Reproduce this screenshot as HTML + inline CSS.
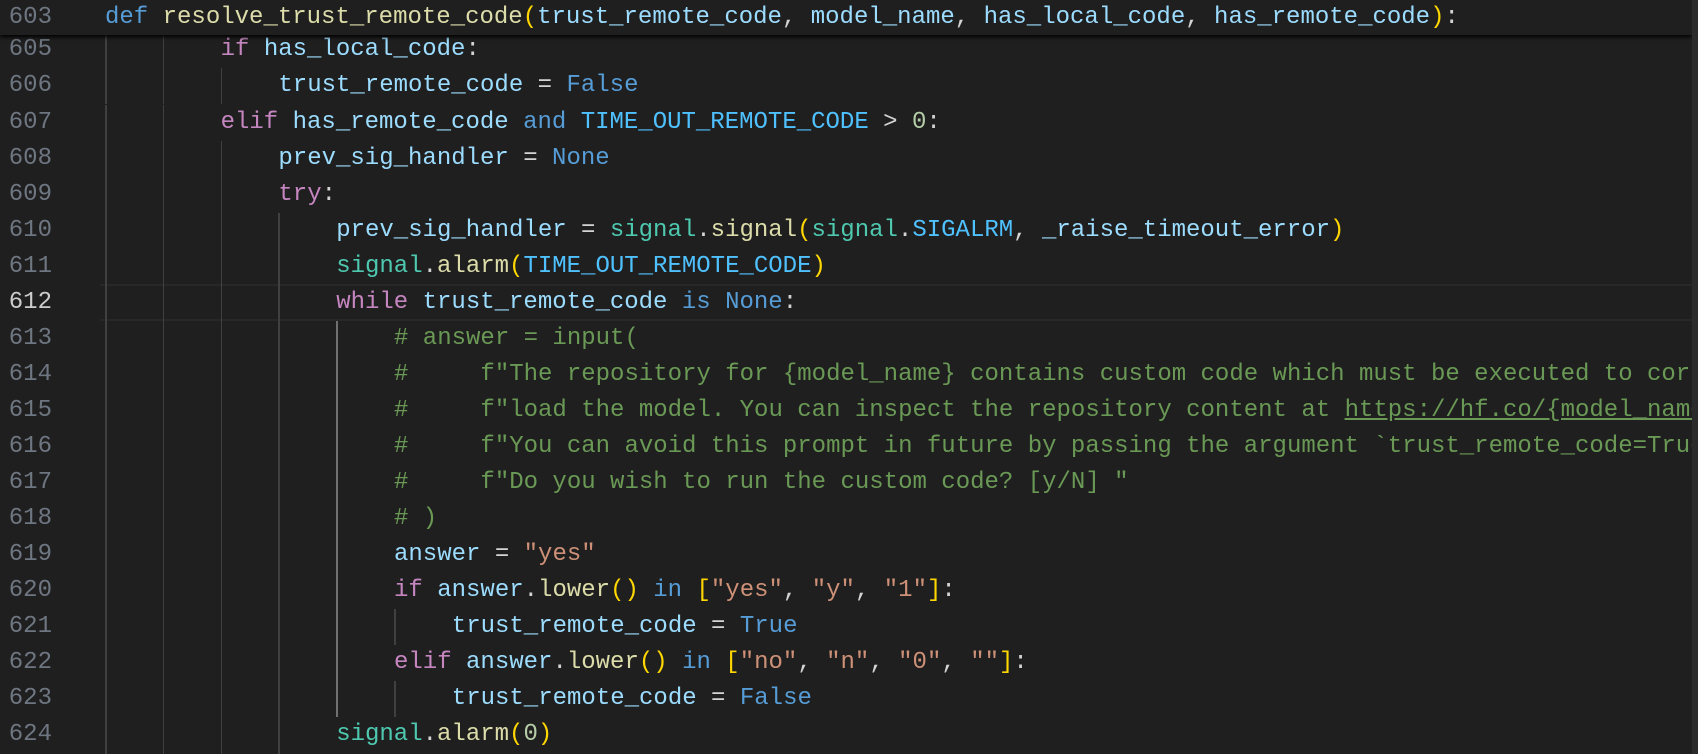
<!DOCTYPE html>
<html><head><meta charset="utf-8"><style>
html,body{margin:0;padding:0;background:#1f1f1f;width:1698px;height:754px;overflow:hidden}
*{box-sizing:border-box}
#ed{position:absolute;left:0;top:0;width:1692px;height:754px;overflow:hidden;background:#1f1f1f;font-family:"Liberation Mono",monospace;font-size:24px}
.ln{position:absolute;left:0;width:52px;text-align:right;color:#6e7681;height:36px;line-height:36px;white-space:pre}
.cd{position:absolute;left:105px;height:36px;line-height:36px;white-space:pre;color:#d4d4d4}
.g{position:absolute;width:1.5px;background:#404040;height:36.05px}
.ga{background:#707070}
.k{color:#c586c0}.b{color:#569cd6}.f{color:#dcdcaa}.v{color:#9cdcfe}.c{color:#4fc1ff}.m{color:#4ec9b0}.s{color:#ce9178}.n{color:#b5cea8}.y{color:#ffd700}.cm{color:#6a9955}.u{text-decoration:underline}
#sticky{position:absolute;left:0;top:0;width:1692px;height:35px;background:#1f1f1f;box-shadow:0 2px 4px #000;z-index:5}
#cur{position:absolute;left:100px;top:284px;width:1592px;height:37px;border-top:2px solid #282828;border-bottom:2px solid #282828}
#sb{position:absolute;left:1692px;top:0;width:6px;height:754px;background:#2b2b2b}
</style></head><body>
<div id="ed">
<div id="cur"></div>
<div id="lines"></div>
<div id="sticky"><div class="ln" style="top:0">603</div><div class="cd" style="top:0"><span class="b">def</span> <span class="f">resolve_trust_remote_code</span><span class="y">(</span><span class="v">trust_remote_code</span>, <span class="v">model_name</span>, <span class="v">has_local_code</span>, <span class="v">has_remote_code</span><span class="y">)</span>:</div></div>
</div>
<div id="sb"></div>
<script>
var L=[
[605,2,'<span class="k">if</span> <span class="v">has_local_code</span>:'],
[606,3,'<span class="v">trust_remote_code</span> = <span class="b">False</span>'],
[607,2,'<span class="k">elif</span> <span class="v">has_remote_code</span> <span class="b">and</span> <span class="c">TIME_OUT_REMOTE_CODE</span> &gt; <span class="n">0</span>:'],
[608,3,'<span class="v">prev_sig_handler</span> = <span class="b">None</span>'],
[609,3,'<span class="k">try</span>:'],
[610,4,'<span class="v">prev_sig_handler</span> = <span class="m">signal</span>.<span class="f">signal</span><span class="y">(</span><span class="m">signal</span>.<span class="c">SIGALRM</span>, <span class="v">_raise_timeout_error</span><span class="y">)</span>'],
[611,4,'<span class="m">signal</span>.<span class="f">alarm</span><span class="y">(</span><span class="c">TIME_OUT_REMOTE_CODE</span><span class="y">)</span>'],
[612,4,'<span class="k">while</span> <span class="v">trust_remote_code</span> <span class="b">is</span> <span class="b">None</span>:'],
[613,5,'<span class="cm"># answer = input(</span>'],
[614,5,'<span class="cm">#     f"The repository for {model_name} contains custom code which must be executed to correctly "</span>'],
[615,5,'<span class="cm">#     f"load the model. You can inspect the repository content at <span class="u">https://hf.co/{model_name}</span>.\\n"</span>'],
[616,5,'<span class="cm">#     f"You can avoid this prompt in future by passing the argument `trust_remote_code=True`.\\n\\n"</span>'],
[617,5,'<span class="cm">#     f"Do you wish to run the custom code? [y/N] "</span>'],
[618,5,'<span class="cm"># )</span>'],
[619,5,'<span class="v">answer</span> = <span class="s">"yes"</span>'],
[620,5,'<span class="k">if</span> <span class="v">answer</span>.<span class="f">lower</span><span class="y">()</span> <span class="b">in</span> <span class="y">[</span><span class="s">"yes"</span>, <span class="s">"y"</span>, <span class="s">"1"</span><span class="y">]</span>:'],
[621,6,'<span class="v">trust_remote_code</span> = <span class="b">True</span>'],
[622,5,'<span class="k">elif</span> <span class="v">answer</span>.<span class="f">lower</span><span class="y">()</span> <span class="b">in</span> <span class="y">[</span><span class="s">"no"</span>, <span class="s">"n"</span>, <span class="s">"0"</span>, <span class="s">""</span><span class="y">]</span>:'],
[623,6,'<span class="v">trust_remote_code</span> = <span class="b">False</span>'],
[624,4,'<span class="m">signal</span>.<span class="f">alarm</span><span class="y">(</span><span class="n">0</span><span class="y">)</span>'],
[625,4,'']
];
var h='',cw=14.45,lh=36.05,t0=32.4;
L.forEach(function(r,i){var t=t0+i*lh;
 if(r[0]<625)h+='<div class="ln" style="top:'+t+'px;'+(r[0]==612?'color:#cccccc':'')+'">'+r[0]+'</div>';
 for(var k=0;k<r[1];k++){var act=(k==4&&r[0]>=613&&r[0]<=623);h+='<div class="g'+(act?' ga':'')+'" style="left:'+(105+k*4*cw)+'px;top:'+t+'px"></div>';}
 h+='<div class="cd" style="top:'+t+'px;left:'+(105+r[1]*4*cw)+'px">'+r[2]+'</div>';
});
document.getElementById('lines').innerHTML=h;
</script>
</body></html>
